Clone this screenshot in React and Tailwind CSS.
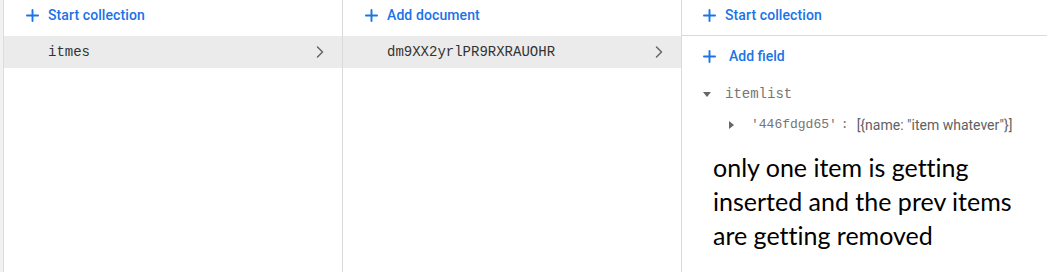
import { Plus, ChevronRight } from "lucide-react";

const roboto = { fontFamily: "Roboto, 'Liberation Sans', sans-serif" };

function AddButton({ label, className = "" }) {
  return (
    <div className={`flex items-center h-[30px] text-[#1a73e8] ${className}`}>
      <Plus size={19} strokeWidth={2.4} className="ml-[19px] shrink-0" />
      <span className="ml-[6px] text-[14px] font-medium tracking-[0.1px]" style={roboto}>
        {label}
      </span>
    </div>
  );
}

function Row({ text }) {
  return (
    <div className="flex items-center h-[32px] bg-[#ebebeb] pl-[44px] pr-[12px] font-['Liberation_Mono',monospace] text-[14px] text-[#333]">
      <span className="flex-1">{text}</span>
      <ChevronRight size={20} strokeWidth={1.8} className="text-[#666]" />
    </div>
  );
}

export default function App() {
  return (
    <div className="flex w-[1047px] h-[272px] bg-white overflow-hidden">
      <div className="w-[4px] bg-[#f1f1f1] border-r border-[#dcdcdc] shrink-0" />

      {/* collections */}
      <div className="w-[339px] border-r border-[#dadada] flex flex-col">
        <div className="h-[36px]">
          <AddButton label="Start collection" />
        </div>
        <Row text="itmes" />
      </div>

      {/* documents */}
      <div className="w-[339px] border-r border-[#dadada] flex flex-col">
        <div className="h-[36px]">
          <AddButton label="Add document" />
        </div>
        <Row text="dm9XX2yrlPR9RXRAUOHR" />
      </div>

      {/* fields */}
      <div className="flex-1 flex flex-col">
        <div className="h-[36px] border-b border-[#dadada]">
          <AddButton label="Start collection" className="-ml-[1px]" />
        </div>
        <div className="flex items-center h-[40px] text-[#1a73e8] pt-[1px]">
          <Plus size={19} strokeWidth={2.4} className="ml-[18px] shrink-0" />
          <span className="ml-[10px] text-[14px] font-medium" style={roboto}>
            Add field
          </span>
        </div>
        <div className="flex items-center h-[35px] pt-[1px] font-['Liberation_Mono',monospace] text-[14px] text-[#757575]">
          <span className="ml-[21px] w-0 h-0 border-l-[4.5px] border-r-[4.5px] border-t-[5px] border-l-transparent border-r-transparent border-t-[#666]" />
          <span className="ml-[14px]">itemlist</span>
        </div>
        <div className="flex items-center h-[28px] text-[#757575]">
          <span className="ml-[47px] w-0 h-0 border-t-[4.5px] border-b-[4.5px] border-l-[5px] border-t-transparent border-b-transparent border-l-[#666]" />
          <span className="ml-[17px] font-['Liberation_Mono',monospace] text-[13px]">'446fdgd65'</span>
          <span className="ml-[4px] font-['Liberation_Mono',monospace] text-[13px]">:</span>
          <span className="ml-[8px] text-[14px] text-[#616161]" style={roboto}>
            [{"{"}name: "item whatever"{"}"}]
          </span>
        </div>
        <p className="mt-[11px] ml-[31px] text-[25px] leading-[34px] text-black font-['Lato',sans-serif] [font-variant-ligatures:none]">
          only one item is getting
          <br />
          inserted and the prev items
          <br />
          are getting removed
        </p>
      </div>
    </div>
  );
}
